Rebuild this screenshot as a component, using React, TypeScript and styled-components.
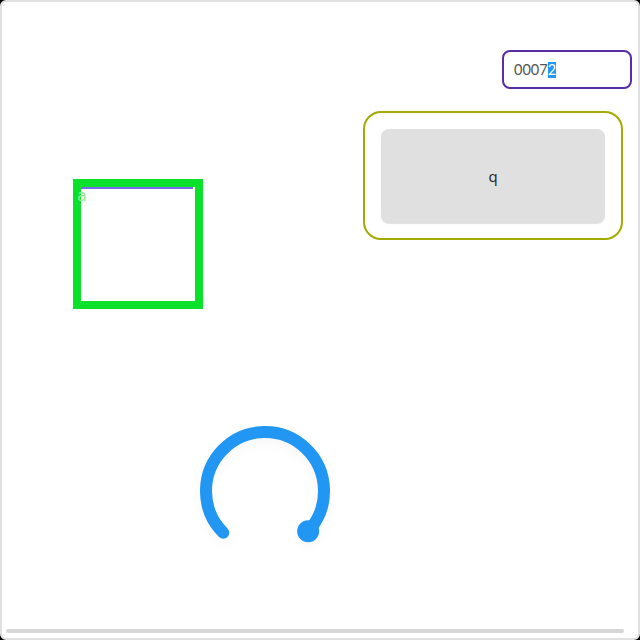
import React from "react";
import styled, { createGlobalStyle } from "styled-components";

const GlobalStyle = createGlobalStyle`
  html, body {
    margin: 0;
    padding: 0;
    background: #000;
  }
  body {
    font-family: Lato, "Open Sans", sans-serif;
  }
`;

const Frame = styled.div`
  width: 640px;
  height: 640px;
  box-sizing: border-box;
  border: 2px solid #e0e0e0;
  border-radius: 6px;
  background: #fff;
  display: flex;
  flex-direction: column;
  overflow: hidden;
`;

const TopRow = styled.div`
  display: flex;
  justify-content: space-between;
  align-items: flex-start;
  padding-top: 48px;
`;

const Square = styled.div`
  position: relative;
  margin-left: 71px;
  margin-top: 129px;
  width: 130px;
  height: 130px;
  box-sizing: border-box;
  border: 8px solid #0be12b;
`;

const TopLine = styled.div`
  width: 112px;
  height: 2px;
  background: #7b68ee;
`;

const Tag = styled.span`
  position: absolute;
  left: -4px;
  top: 1px;
  font-family: "DejaVu Sans", sans-serif;
  font-size: 16px;
  line-height: 16px;
  color: #90ee90;
`;

const RightCol = styled.div`
  display: flex;
  flex-direction: column;
  align-items: flex-end;
  margin-right: 6px;
`;

const Field = styled.div`
  width: 130px;
  height: 39px;
  box-sizing: border-box;
  border: 2px solid #5a2ca6;
  border-radius: 8px;
  padding-left: 10px;
  display: flex;
  align-items: center;
  font-family: Lato, sans-serif;
  font-size: 14.5px;
  color: #555;
`;

const Selected = styled.span`
  background: #2196f3;
  color: #fff;
  line-height: 16px;
`;

const Card = styled.div`
  margin-top: 22px;
  margin-right: 9px;
  width: 260px;
  height: 129px;
  box-sizing: border-box;
  border: 2px solid #a4ab00;
  border-radius: 18px;
  padding: 16px;
`;

const KeyButton = styled.button`
  width: 224px;
  height: 93px;
  border: none;
  border-radius: 8px;
  background: #e0e0e0;
  box-shadow: 0 2px 1px rgba(0, 0, 0, 0.12);
  font-family: "Open Sans", sans-serif;
  font-size: 15px;
  color: #222;
  padding: 0;
`;

const Gauge = styled.svg`
  margin-left: 193px;
  margin-top: 112px;
  display: block;
  filter: drop-shadow(0 5px 5px rgba(0, 0, 0, 0.03));
`;

const Track = styled.div`
  margin-top: auto;
  margin-left: 4px;
  margin-bottom: 5px;
  width: 618px;
  height: 4px;
  border-radius: 2px;
  background: #d6d6d6;
`;

const cx = 70;
const cy = 70;
const r = 59;
const pt = (deg: number) => {
  const a = (deg * Math.PI) / 180;
  return [cx + r * Math.cos(a), cy + r * Math.sin(a)];
};
const [sx, sy] = pt(135);
const [ex, ey] = pt(43);

export default function App() {
  return (
    <>
      <GlobalStyle />
      <Frame>
        <TopRow>
          <Square>
            <TopLine />
            <Tag>a</Tag>
          </Square>
          <RightCol>
            <Field>
              0007<Selected>2</Selected>
            </Field>
            <Card>
              <KeyButton>q</KeyButton>
            </Card>
          </RightCol>
        </TopRow>
        <Gauge width="140" height="140" viewBox="0 0 140 140">
          <path
            d={`M ${sx} ${sy} A ${r} ${r} 0 1 1 ${ex} ${ey}`}
            fill="none"
            stroke="#2196f3"
            strokeWidth={12}
            strokeLinecap="round"
          />
          <circle cx={ex} cy={ey} r={11} fill="#2196f3" />
        </Gauge>
        <Track />
      </Frame>
    </>
  );
}
